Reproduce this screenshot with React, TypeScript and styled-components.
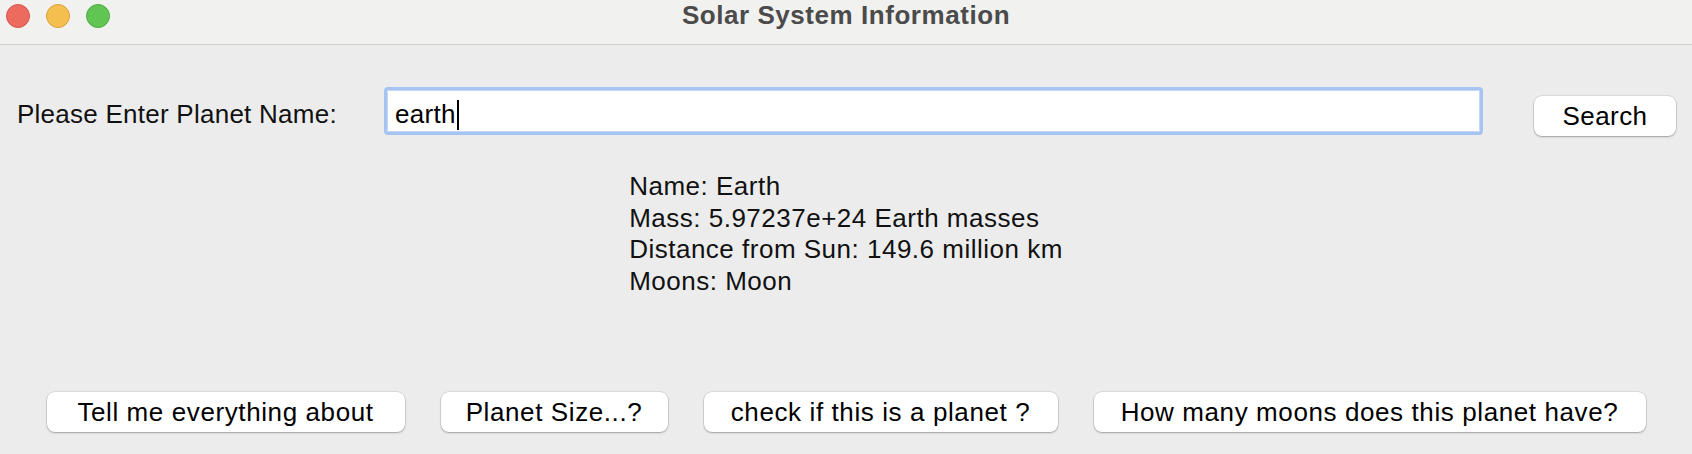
import React from "react";
import styled, { createGlobalStyle } from "styled-components";

const GlobalStyle = createGlobalStyle`
  html, body {
    margin: 0;
    padding: 0;
    background: #ececec;
  }
  body {
    font-family: "Liberation Sans", Arial, Helvetica, sans-serif;
    -webkit-font-smoothing: antialiased;
  }
  * { box-sizing: border-box; }
`;

const Window = styled.div`
  width: 1692px;
  height: 454px;
  display: flex;
  flex-direction: column;
  background: #ececec;
  overflow: hidden;
`;

const TitleBar = styled.div`
  height: 45px;
  flex: none;
  display: grid;
  grid-template-columns: 1fr auto 1fr;
  align-items: start;
  background: #f1f1ef;
  border-bottom: 1px solid #cdcdcd;
`;

const Lights = styled.div`
  display: flex;
  gap: 16px;
  padding: 4px 0 0 6px;
`;

const Light = styled.span<{ $fill: string; $edge: string }>`
  width: 24px;
  height: 24px;
  border-radius: 50%;
  background: ${(p) => p.$fill};
  border: 1px solid ${(p) => p.$edge};
`;

const Title = styled.div`
  margin-top: 0;
  font-size: 26px;
  line-height: 30px;
  font-weight: 700;
  letter-spacing: 0.55px;
  color: #4b4b4b;
  white-space: nowrap;
`;

const Content = styled.div`
  flex: 1;
  display: flex;
  flex-direction: column;
  padding-bottom: 22px;
`;

const SearchRow = styled.div`
  margin-top: 42px;
  height: 48px;
  display: grid;
  grid-template-columns: 367px 1099px 193px;
  align-items: start;
  padding-left: 17px;
`;

const Label = styled.div`
  margin-top: 12px;
  font-size: 26px;
  line-height: 30px;
  letter-spacing: 0.25px;
  color: #111;
  white-space: nowrap;
`;

const Field = styled.div`
  height: 48px;
  display: flex;
  align-items: flex-start;
  padding: 6px 8px 0;
  background: #ffffff;
  border: 3px solid #a6c4f1;
  border-radius: 4px;
  box-shadow: inset 0 0 0 1px #c4d7f5;
  font-size: 26px;
  line-height: 36px;
  letter-spacing: 0.3px;
  color: #000;
`;

const Caret = styled.span`
  width: 2px;
  height: 30px;
  margin-top: 4px;
  margin-left: 1px;
  background: #000;
`;

const Button = styled.button<{ $w: number }>`
  width: ${(p) => p.$w}px;
  height: 40px;
  padding: 0;
  border: none;
  border-radius: 8px;
  background: #ffffff;
  box-shadow: 0 0 0 0.5px rgba(0, 0, 0, 0.14), 0 1px 2px rgba(0, 0, 0, 0.28);
  font-family: "Liberation Sans", Arial, Helvetica, sans-serif;
  font-size: 26px;
  line-height: 40px;
  letter-spacing: 0.6px;
  color: #000;
  white-space: nowrap;
  cursor: default;
`;

const SearchButton = styled(Button)`
  margin-top: 9px;
  margin-left: 51px;
  letter-spacing: 0.4px;
`;

const Info = styled.div`
  margin-top: 36px;
  align-self: center;
  font-size: 26px;
  line-height: 31.5px;
  letter-spacing: 0.5px;
  color: #111;
  white-space: nowrap;
`;

const ActionRow = styled.div`
  margin-top: auto;
  display: flex;
  justify-content: center;
  gap: 36px;
`;

const info = [
  "Name: Earth",
  "Mass: 5.97237e+24 Earth masses",
  "Distance from Sun: 149.6 million km",
  "Moons: Moon",
];

const actions: { label: string; width: number }[] = [
  { label: "Tell me everything about", width: 358 },
  { label: "Planet Size...?", width: 227 },
  { label: "check if this is a planet ?", width: 354 },
  { label: "How many moons does this planet have?", width: 552 },
];

export default function App() {
  return (
    <>
      <GlobalStyle />
      <Window>
        <TitleBar>
          <Lights>
            <Light $fill="#ed6a5e" $edge="#d5574c" />
            <Light $fill="#f5bf4f" $edge="#d9a13b" />
            <Light $fill="#61c554" $edge="#4fab42" />
          </Lights>
          <Title>Solar System Information</Title>
          <div />
        </TitleBar>
        <Content>
          <SearchRow>
            <Label>Please Enter Planet Name:</Label>
            <Field>
              earth
              <Caret />
            </Field>
            <SearchButton $w={142}>Search</SearchButton>
          </SearchRow>
          <Info>
            {info.map((line) => (
              <div key={line}>{line}</div>
            ))}
          </Info>
          <ActionRow>
            {actions.map((a) => (
              <Button key={a.label} $w={a.width}>
                {a.label}
              </Button>
            ))}
          </ActionRow>
        </Content>
      </Window>
    </>
  );
}
